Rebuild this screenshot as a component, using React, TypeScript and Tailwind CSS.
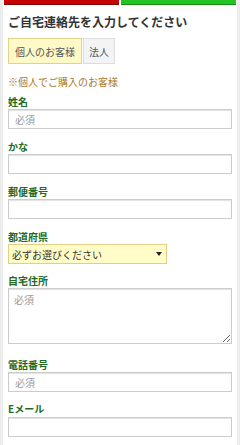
import React from 'react';

const font = { fontFamily: '"Noto Sans CJK JP", "Noto Sans", sans-serif' };

const Label = ({ children }: { children: React.ReactNode }) => (
  <div className="text-[10px] leading-[14px] font-bold text-[#236b1e]">{children}</div>
);

const TextInput = ({ placeholder }: { placeholder?: string }) => (
  <input
    type="text"
    placeholder={placeholder}
    style={font}
    className="block w-full h-[20px] border border-[#cccccc] bg-white px-[6px] text-[10px] text-[#333] shadow-[inset_0_1px_1px_rgba(0,0,0,0.12)] placeholder:text-[#999] outline-none"
  />
);

export default function App() {
  return (
    <div className="w-[240px] h-[445px] bg-[#ececec] pl-[3px] pr-[3px] overflow-hidden" style={font}>
      <div className="bg-white h-full px-[1px]">
        {/* progress bar */}
        <div className="flex gap-[2px] h-[5px]">
          <div className="flex-1 bg-[#c40000] border-b border-[#8a0000]" />
          <div className="flex-1 bg-[#22c322] border-b border-[#129012]" />
        </div>

        <div className="px-[4px]">
          <h1 className="mt-[8px] text-[12px] leading-[17px] font-bold text-[#333]">
            ご自宅連絡先を入力してください
          </h1>

          {/* customer type tabs */}
          <div className="mt-[8px] flex gap-[1px]">
            <button className="h-[26px] px-[6px] border border-[#e3d08a] bg-[#fff9c6] text-[10px] text-[#555]">
              個人のお客様
            </button>
            <button className="h-[26px] px-[5px] border border-[#dddddd] bg-[#f4f4f4] text-[10px] text-[#555]">
              法人
            </button>
          </div>

          <p className="mt-[10px] text-[10px] leading-[15px] text-[#a8782e]">※個人でご購入のお客様</p>

          <div className="mt-[6px]">
            <Label>姓名</Label>
            <TextInput placeholder="必須" />
          </div>

          <div className="mt-[11px]">
            <Label>かな</Label>
            <TextInput />
          </div>

          <div className="mt-[11px]">
            <Label>郵便番号</Label>
            <TextInput />
          </div>

          <div className="mt-[11px]">
            <Label>都道府県</Label>
            <div className="relative w-[159px] h-[20px]">
              <select
                style={font}
                className="appearance-none block w-full h-full border border-[#e2cf85] bg-[#fffcc8] pl-[3px] text-[10px] text-[#333] outline-none"
              >
                <option>必ずお選びください</option>
              </select>
              <span className="absolute right-[5px] top-[8px] border-x-[3px] border-t-[4px] border-x-transparent border-t-[#222]" />
            </div>
          </div>

          <div className="mt-[10px]">
            <Label>自宅住所</Label>
            <textarea
              placeholder="必須"
              style={font}
              className="block w-full h-[56px] border border-[#cccccc] px-[5px] py-[3px] text-[10px] text-[#333] shadow-[inset_0_1px_1px_rgba(0,0,0,0.12)] placeholder:text-[#999] outline-none"
            />
          </div>

          <div className="mt-[14px]">
            <Label>電話番号</Label>
            <TextInput placeholder="必須" />
          </div>

          <div className="mt-[10px]">
            <Label>Eメール</Label>
            <div className="mt-[1px]">
              <TextInput />
            </div>
          </div>
        </div>
      </div>
    </div>
  );
}
